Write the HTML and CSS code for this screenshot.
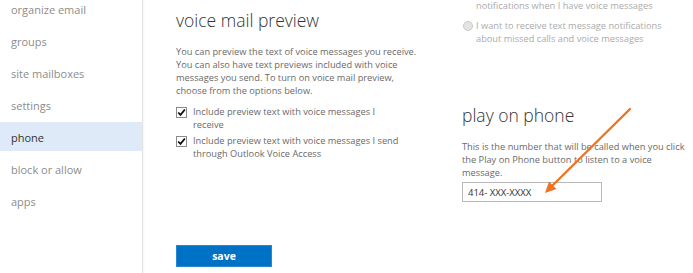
FILE: index.html
```html
<!DOCTYPE html>
<html lang="en">
<head>
    <meta charset="UTF-8">
    <title>voice mail - options</title>
    <link rel="stylesheet" href="styles.css">
</head>
<body>
    <div class="page">
        <nav class="sidebar">
            <ul class="nav-list">
                <li class="nav-item">organize email</li>
                <li class="nav-item">groups</li>
                <li class="nav-item">site mailboxes</li>
                <li class="nav-item">settings</li>
                <li class="nav-item active">phone</li>
                <li class="nav-item">block or allow</li>
                <li class="nav-item">apps</li>
            </ul>
        </nav>

        <main class="content">
            <section class="col col-preview">
                <h1 class="section-title">voice mail preview</h1>
                <p class="desc">You can preview the text of voice messages you receive. You can also have text previews included with voice messages you send. To turn on voice mail preview, choose from the options below.</p>

                <label class="option">
                    <span class="checkbox">
                        <svg viewBox="0 0 10 10" width="9" height="9"><path d="M1.3 5 L3.9 7.7 L8.8 1.6" fill="none" stroke="#111" stroke-width="2"/></svg>
                    </span>
                    <span class="option-text">Include preview text with voice messages I receive</span>
                </label>
                <label class="option">
                    <span class="checkbox">
                        <svg viewBox="0 0 10 10" width="9" height="9"><path d="M1.3 5 L3.9 7.7 L8.8 1.6" fill="none" stroke="#111" stroke-width="2"/></svg>
                    </span>
                    <span class="option-text">Include preview text with voice messages I send through Outlook Voice Access</span>
                </label>

                <button class="save-btn">save</button>
            </section>

            <section class="col col-phone">
                <div class="radio-group">
                    <div class="radio-option">
                        <span class="radio-label">notifications when I have voice messages</span>
                    </div>
                    <div class="radio-option">
                        <span class="radio"></span>
                        <span class="radio-label">I want to receive text message notifications about missed calls and voice messages</span>
                    </div>
                </div>

                <h2 class="section-title">play on phone</h2>
                <p class="desc">This is the number that will be called when you click the Play on Phone button to listen to a voice message.</p>
                <input class="phone-input" type="text" value="414- XXX-XXXX">
            </section>
        </main>

        <!-- annotation arrow drawn over the screenshot -->
        <svg class="arrow" width="693" height="273" viewBox="0 0 693 273">
            <line x1="630" y1="109" x2="552" y2="186" stroke="#ec7422" stroke-width="2.4" stroke-linecap="round"/>
            <polygon points="545,193 549,181.5 556.5,189" fill="#ec7422"/>
        </svg>
    </div>
</body>
</html>
```

FILE: styles.css
```css
* {
    margin: 0;
    padding: 0;
    box-sizing: border-box;
}

body {
    font-family: 'Open Sans', 'Liberation Sans', sans-serif;
    background: white;
    color: #666;
    overflow: hidden;
}

.page {
    position: relative;
    display: flex;
    height: 273px;
}

.sidebar {
    width: 143px;
    flex-shrink: 0;
    border-right: 1px solid #e4e4e4;
    box-shadow: 1px 0 2px rgba(0,0,0,0.05);
}

.nav-list {
    list-style: none;
    margin-top: -6px;
}

.nav-item {
    height: 29px;
    line-height: 26px;
    padding-top: 3px;
    margin-bottom: 3px;
    padding-left: 11px;
    font-size: 11px;
    color: #8c8c8c;
    cursor: pointer;
}

.nav-item.active {
    background: #deeaf8;
    color: #333;
}

.content {
    display: flex;
    padding-left: 33px;
}

.col-preview {
    width: 286px;
    display: flex;
    flex-direction: column;
}

.col-phone {
    width: 231px;
}

.section-title {
    font-size: 17.5px;
    font-weight: 300;
    color: #333;
    line-height: 26px;
}

.col-preview .section-title {
    margin-top: 7px;
}

.desc {
    font-size: 9.25px;
    line-height: 13px;
    color: #6a6a6a;
}

.col-preview .desc {
    margin-top: 12px;
    width: 244px;
}

.option {
    display: flex;
    gap: 6px;
    font-size: 9.25px;
    line-height: 13px;
    color: #6a6a6a;
}

.option-text {
    width: 214px;
}

.option:first-of-type {
    margin-top: 8px;
}

.option + .option {
    margin-top: 3px;
}

.checkbox {
    flex-shrink: 0;
    width: 11px;
    height: 11px;
    margin-top: 2px;
    border: 1px solid #8a8a8a;
    display: flex;
    align-items: center;
    justify-content: center;
    background: white;
}

.save-btn {
    margin-top: auto;
    margin-bottom: 6px;
    width: 96px;
    height: 22px;
    background: #0072c6;
    border: 1px solid #2a86cf;
    color: white;
    font-family: inherit;
    font-weight: bold;
    font-size: 10.5px;
}

.radio-group {
    color: #ababab;
    font-size: 9.25px;
    line-height: 13px;
}

.radio-option {
    display: flex;
    gap: 3px;
    padding-left: 14px;
}

.radio-option:first-child {
    margin-top: -1px;
}

.radio-option + .radio-option {
    margin-top: 7px;
    padding-left: 1px;
}

.radio-label {
    width: 205px;
}

.radio {
    flex-shrink: 0;
    width: 10px;
    height: 10px;
    margin-top: 2px;
    border-radius: 50%;
    border: 1px solid #c8c8c8;
    background: #e4e4e4;
}

.col-phone .section-title {
    margin-top: 57px;
}

.col-phone .desc {
    margin-top: 12px;
    width: 231px;
}

.phone-input {
    display: block;
    width: 140px;
    height: 20px;
    margin-top: 3px;
    border: 1px solid #b8b8b8;
    padding: 0 5px;
    font-family: inherit;
    font-size: 9.5px;
    color: #333;
    outline: none;
}

.arrow {
    position: absolute;
    left: 0;
    top: 0;
    pointer-events: none;
}
```
